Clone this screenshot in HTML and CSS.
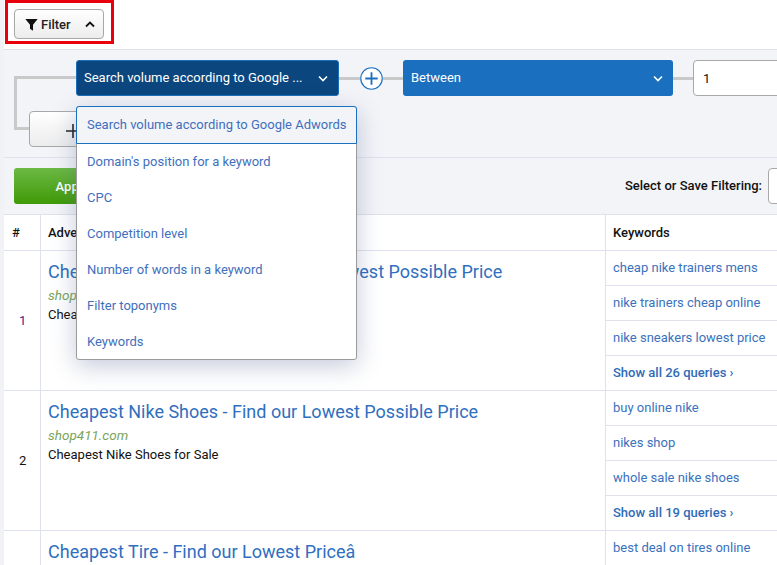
FILE: index.html
```html
<!DOCTYPE html>
<html lang="en">
<head>
<meta charset="utf-8">
<title>Ads</title>
<link rel="stylesheet" href="styles.css">
</head>
<body>
<div class="page">
  <div class="toolbar">
    <button class="filter-btn">
      <svg class="funnel" viewBox="0 0 12 12" width="13" height="13"><path d="M0.3 1h11.4L7.4 6.2V11.8L4.6 10V6.2z" fill="#111"/></svg>
      <span>Filter</span>
      <svg class="caret" viewBox="0 0 10 7" width="10" height="7"><path d="M1 5.5l4-4 4 4" fill="none" stroke="#111" stroke-width="1.8"/></svg>
    </button>
  </div>
  <div class="highlight"></div>

  <div class="panel">
    <div class="tree">
      <div class="tree-line"></div>
      <div class="filter-row">
        <div class="select select-dark"><span>Search volume according to Google ...</span><svg viewBox="0 0 10 7" width="10" height="7"><path d="M1 1.5l4 4 4-4" fill="none" stroke="#fff" stroke-width="1.6"/></svg></div>
        <div class="link link-a"></div>
        <div class="plus"><svg viewBox="0 0 24 24" width="23" height="23"><circle cx="12" cy="12" r="11.2" fill="#fff" stroke="#1a6fbf" stroke-width="1.2"/><path d="M12 5.5v13M5.5 12h13" stroke="#1a6fbf" stroke-width="1.9"/></svg></div>
        <div class="link link-b"></div>
        <div class="select select-blue"><span>Between</span><svg viewBox="0 0 10 7" width="10" height="7"><path d="M1 1.5l4 4 4-4" fill="none" stroke="#fff" stroke-width="1.6"/></svg></div>
        <div class="link link-b"></div>
        <div class="input">1</div>
      </div>
      <div class="add-btn"><svg viewBox="0 0 14 14" width="14" height="14"><path d="M7 0v14M0 7h14" stroke="#222" stroke-width="1.6"/></svg></div>
    </div>
  </div>

  <div class="actions">
    <button class="apply">Apply</button>
    <div class="save"><span>Select or Save Filtering:</span><div class="save-box"></div></div>
  </div>

  <div class="table">
    <div class="row row-head">
      <div class="cell-num"><b>#</b></div>
      <div class="cell-ad"><b>Advertisements</b></div>
      <div class="cell-kw head-kw"><b>Keywords</b></div>
    </div>

    <div class="row">
      <div class="cell-num num-link">1</div>
      <div class="cell-ad ad">
        <a class="ad-title">Cheapest Nike Sneakers - Find our Lowest Possible Price</a>
        <div class="ad-domain">shop411.com</div>
        <div class="ad-text">Cheapest Nike Sneakers for Sale</div>
      </div>
      <div class="cell-kw">
        <a class="kw">cheap nike trainers mens</a>
        <a class="kw">nike trainers cheap online</a>
        <a class="kw">nike sneakers lowest price</a>
        <a class="kw kw-more">Show all 26 queries ›</a>
      </div>
    </div>

    <div class="row">
      <div class="cell-num">2</div>
      <div class="cell-ad ad">
        <a class="ad-title">Cheapest Nike Shoes - Find our Lowest Possible Price</a>
        <div class="ad-domain">shop411.com</div>
        <div class="ad-text">Cheapest Nike Shoes for Sale</div>
      </div>
      <div class="cell-kw">
        <a class="kw">buy online nike</a>
        <a class="kw">nikes shop</a>
        <a class="kw">whole sale nike shoes</a>
        <a class="kw kw-more">Show all 19 queries ›</a>
      </div>
    </div>

    <div class="row">
      <div class="cell-num"></div>
      <div class="cell-ad ad">
        <a class="ad-title">Cheapest Tire - Find our Lowest Priceâ</a>
      </div>
      <div class="cell-kw">
        <a class="kw">best deal on tires online</a>
      </div>
    </div>
  </div>

  <ul class="menu">
    <li class="menu-active">Search volume according to Google Adwords</li>
    <li>Domain's position for a keyword</li>
    <li>CPC</li>
    <li>Competition level</li>
    <li>Number of words in a keyword</li>
    <li>Filter toponyms</li>
    <li>Keywords</li>
  </ul>
</div>
</body>
</html>
```

FILE: styles.css
```css
* { box-sizing: border-box; }
html, body { margin: 0; padding: 0; height: 100%; overflow: hidden; background: #fff; }
body { font-family: Roboto, "Liberation Sans", sans-serif; font-size: 13px; color: #111; }
.page { position: relative; width: 777px; height: 565px; overflow: hidden; border-left: 4px solid #f1f2f5; }

.toolbar { height: 50px; padding: 9px 10px; border-bottom: 1px solid #dfe2ee; }
.filter-btn { display: flex; align-items: center; width: 90px; height: 30px; padding: 0 0 0 10px; border: 1px solid #a8a8a8; border-radius: 4px; background: linear-gradient(#fff, #ececec); font: 500 13px Roboto, sans-serif; color: #222; }
.funnel { margin-right: 3px; }
.caret { margin-left: 14px; }
.highlight { position: absolute; left: 1px; top: 0; width: 109px; height: 44px; border: 3px solid #e8000b; }

.panel { height: 108px; background: #f3f4f8; border-bottom: 1px solid #dfe2ee; padding: 10px 0 0 10px; }
.tree { position: relative; height: 87px; }
.tree-line { position: absolute; left: 0; top: 16px; width: 62px; height: 54px; border: 3px solid #c9c9c9; border-right: 0; }
.filter-row { position: relative; display: flex; align-items: center; width: 900px; margin-left: 62px; height: 36px; }
.select { display: flex; align-items: center; justify-content: space-between; height: 36px; padding: 0 10px 0 8px; border-radius: 3px; color: #fff; font-size: 13px; flex: none; }
.select span { padding-bottom: 2px; }
.select-dark { width: 263px; padding-left: 7px; background: #0b467e; border: 1px solid #1a6fbf; }
.select-blue { width: 270px; background: #1a6fbf; }
.link { height: 3px; background: #c9c9c9; flex: none; }
.link-a { width: 21px; }
.link-b { width: 20px; }
.plus { flex: none; width: 23px; height: 23px; }
.plus svg { display: block; }
.input { width: 150px; height: 36px; padding: 0 9px; line-height: 35px; background: #fff; border: 1px solid #a8a8a8; border-radius: 4px; font-size: 13px; flex: none; }
.add-btn { position: relative; display: flex; align-items: center; justify-content: center; width: 88px; height: 36px; margin: 15px 0 0 15px; padding-top: 3px; background: linear-gradient(#fff, #ececec); border: 1px solid #a8a8a8; border-radius: 4px; }

.actions { display: flex; align-items: center; justify-content: space-between; width: 773px; height: 57px; padding: 0 0 0 10px; background: #f3f4f8; border-bottom: 1px solid #dfe2ee; }
.apply { width: 116px; height: 36px; border: 0; border-radius: 3px; background: linear-gradient(#6cb944, #3f9a06); color: #fff; font: 500 13px Roboto, sans-serif; }
.save { display: flex; align-items: center; gap: 6px; font-weight: 500; flex: none; margin-right: -127px; }
.save span { padding-bottom: 2px; }
.save-box { width: 136px; height: 36px; background: #fff; border: 1px solid #a8a8a8; border-radius: 4px; flex: none; }

.row { display: flex; height: 140px; border-bottom: 1px solid #dfe2ee; }
.row-head { height: 36px; align-items: stretch; }
.row-head b { font-weight: 500; color: #111; }
.cell-num { flex: none; width: 37px; border-right: 1px solid #dfe2ee; padding-left: 8px; display: flex; align-items: center; }
.num-link { color: #551a8b; }
.row:not(.row-head) .cell-num { padding-left: 15px; }
.cell-ad { flex: none; width: 565px; border-right: 1px solid #dfe2ee; padding-left: 7px; }
.row-head .cell-ad, .head-kw { display: flex; align-items: center; }
.cell-kw { flex: 1; min-width: 0; }
.head-kw { padding-left: 7px; }

.ad { padding-top: 10px; }
.ad-title { display: block; font-size: 18px; line-height: 22px; color: #2f6fc0; }
.ad-domain { margin-top: 4px; font-size: 13.5px; line-height: 16px; font-style: italic; color: #7aa45a; }
.ad-text { margin-top: 4px; font-size: 13px; line-height: 16px; color: #111; }

.kw { display: flex; align-items: center; height: 35px; padding: 0 0 2px 7px; color: #3a72bd; border-bottom: 1px solid #dfe2ee; }
.kw:last-child { border-bottom: 0; }
.kw-more { font-weight: 500; color: #2f6cb8; }

.menu { position: absolute; left: 72px; top: 106px; width: 281px; height: 254px; margin: 0; padding: 0; list-style: none; background: #fff; border: 1px solid #9a9a9a; border-radius: 3px; box-shadow: 0 6px 24px rgba(70, 90, 140, .32); color: #3f6fbd; }
.menu li { height: 36px; line-height: 36px; padding-left: 10px; }
.menu li.menu-active { height: 38px; background: #f3f4f8; border: 1px solid #1a6fbf; margin: -1px -1px 0; border-radius: 3px 3px 0 0; }
```
